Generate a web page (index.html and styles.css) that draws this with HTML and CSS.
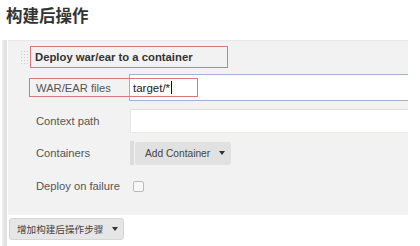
FILE: index.html
```html
<!DOCTYPE html>
<html lang="zh-CN">
<head>
    <meta charset="UTF-8">
    <title>构建后操作</title>
    <link rel="stylesheet" href="styles.css">
</head>
<body>
    <h1 class="page-title">构建后操作</h1>

    <div class="section">
        <div class="panel">
            <div class="panel-head">
                <span class="grip"></span>
                <span class="step-name">Deploy war/ear to a container</span>
            </div>

            <div class="rows">
                <span class="mark mark-war"></span>

                <div class="row row-war">
                    <label class="row-label">WAR/EAR files</label>
                    <div class="field text-field active">target/*<span class="caret-line"></span></div>
                </div>

                <div class="row row-ctx">
                    <label class="row-label">Context path</label>
                    <div class="field text-field"></div>
                </div>

                <div class="row row-cont">
                    <label class="row-label">Containers</label>
                    <div class="field repeat">
                        <button class="btn btn-add">Add Container <span class="tri"></span></button>
                    </div>
                </div>

                <div class="row row-fail">
                    <label class="row-label">Deploy on failure</label>
                    <div class="field">
                        <span class="check"></span>
                    </div>
                </div>
            </div>
        </div>

        <button class="btn btn-step">增加构建后操作步骤 <span class="tri"></span></button>
    </div>
</body>
</html>
```

FILE: styles.css
```css
body {
    margin: 0;
    background-color: #fff;
    font-family: "Liberation Sans", Arial, sans-serif;
    color: #444;
    width: 420px;
    height: 246px;
    overflow: hidden;
}

.page-title {
    margin: 0;
    height: 40px;
    padding-left: 6px;
    font-family: "Noto Sans CJK SC", sans-serif;
    font-size: 16.5px;
    line-height: 30px;
    font-weight: bold;
    color: #333;
}

.section {
    margin-left: 2px;
    border-left: 2px solid #ececec;
    height: 206px;
    box-shadow: inset 3px 0 0 #e3e3e3;
    padding-left: 4px;
}

.panel {
    width: 400px;
    height: 175px;
    box-sizing: border-box;
    background-color: #f2f2f2;
    border-top: 1px solid #e8e8e8;
    padding: 5px 0 0 12px;
}

.panel-head {
    display: flex;
    align-items: center;
    height: 22px;
}

.grip {
    width: 8px;
    height: 15px;
    margin-right: 2px;
    background-image: radial-gradient(circle, #cdcdcd 0.6px, transparent 0.9px);
    background-size: 3px 3px;
}

.step-name {
    box-sizing: border-box;
    width: 198px;
    height: 22px;
    border: 1px solid #d9777a;
    padding-left: 4px;
    font-size: 11.3px;
    font-weight: bold;
    line-height: 20px;
    color: #333;
}

.rows {
    position: relative;
    margin-top: 6px;
    display: flex;
    flex-direction: column;
    gap: 8px;
}

.mark {
    position: absolute;
    border: 1px solid #d9777a;
    box-sizing: border-box;
}

.mark-war {
    left: 9px;
    top: 4px;
    width: 169px;
    height: 19px;
}

.row {
    display: flex;
    align-items: center;
}

.row-war { height: 27px; }
.row-ctx { height: 24px; }
.row-cont { height: 24px; }
.row-fail { height: 26px; }

.row-label {
    width: 110px;
    box-sizing: border-box;
    padding-left: 16px;
    font-size: 11.2px;
    color: #555;
}

.field {
    flex: 1;
    height: 100%;
    box-sizing: border-box;
    display: flex;
    align-items: center;
}

.text-field {
    background-color: #fff;
    border-top: 1px solid #e2ddd6;
    border-bottom: 1px solid #ece9e4;
    border-left: 1px solid #e6e6e6;
    padding-left: 3px;
    font-size: 11.5px;
    color: #222;
}

.text-field.active {
    border-color: #9fb4d4;
    margin-left: -1px;
}

.caret-line {
    display: inline-block;
    width: 1px;
    height: 13px;
    margin-left: 1px;
    background-color: #111;
}

.repeat {
    padding-left: 5px;
    box-shadow: inset 4px 0 0 #dcdcdc;
}

.btn {
    display: flex;
    align-items: center;
    border-radius: 3px;
    cursor: pointer;
    color: #444;
}

.btn-add {
    width: 96px;
    height: 23px;
    border: none;
    background-color: #e1e1e1;
    padding: 0 0 0 10px;
    font-family: "Liberation Sans", Arial, sans-serif;
    font-size: 10.2px;
}

.tri {
    width: 0;
    height: 0;
    margin-left: 9px;
    border-top: 4px solid #333;
    border-left: 3px solid transparent;
    border-right: 3px solid transparent;
}

.check {
    width: 9px;
    height: 9px;
    margin-left: 3px;
    border: 1px solid #bcbcbc;
    border-radius: 2px;
    background-color: #f8f8f8;
}

.btn-step {
    margin-top: 3px;
    margin-left: 1px;
    width: 115px;
    height: 22px;
    border: 1px solid #d6d6d6;
    background-color: #e6e6e6;
    padding: 0 0 0 7px;
    font-family: "Noto Sans CJK SC", sans-serif;
    font-size: 9.6px;
}
```
